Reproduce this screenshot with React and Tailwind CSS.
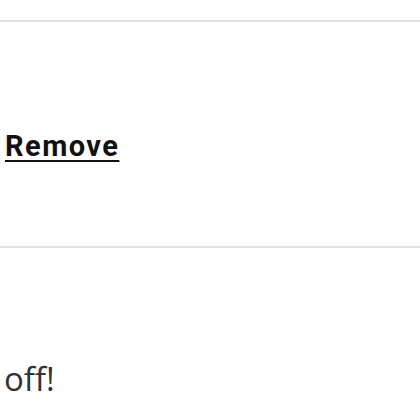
import React from 'react';

const App = () => {
  return (
    <div className="h-[420px] w-[420px] overflow-hidden bg-white" style={{ fontFamily: 'Roboto, "Open Sans", sans-serif' }}>
      <div className="h-5" />
      <section className="border-y-2 border-[#e2e2e2]">
        <div className="h-[224px] pl-[5px] pt-[110px]">
          <a href="#" className="text-[29px] font-bold leading-none tracking-[0.05em] text-[#111] underline decoration-2 underline-offset-4">
            Remove
          </a>
        </div>
      </section>
      <p className="mt-[114px] pl-[4px] text-[33px] leading-none text-[#333]" style={{ fontFamily: '"Open Sans", sans-serif' }}>
        off!
      </p>
    </div>
  );
};

export default App;
